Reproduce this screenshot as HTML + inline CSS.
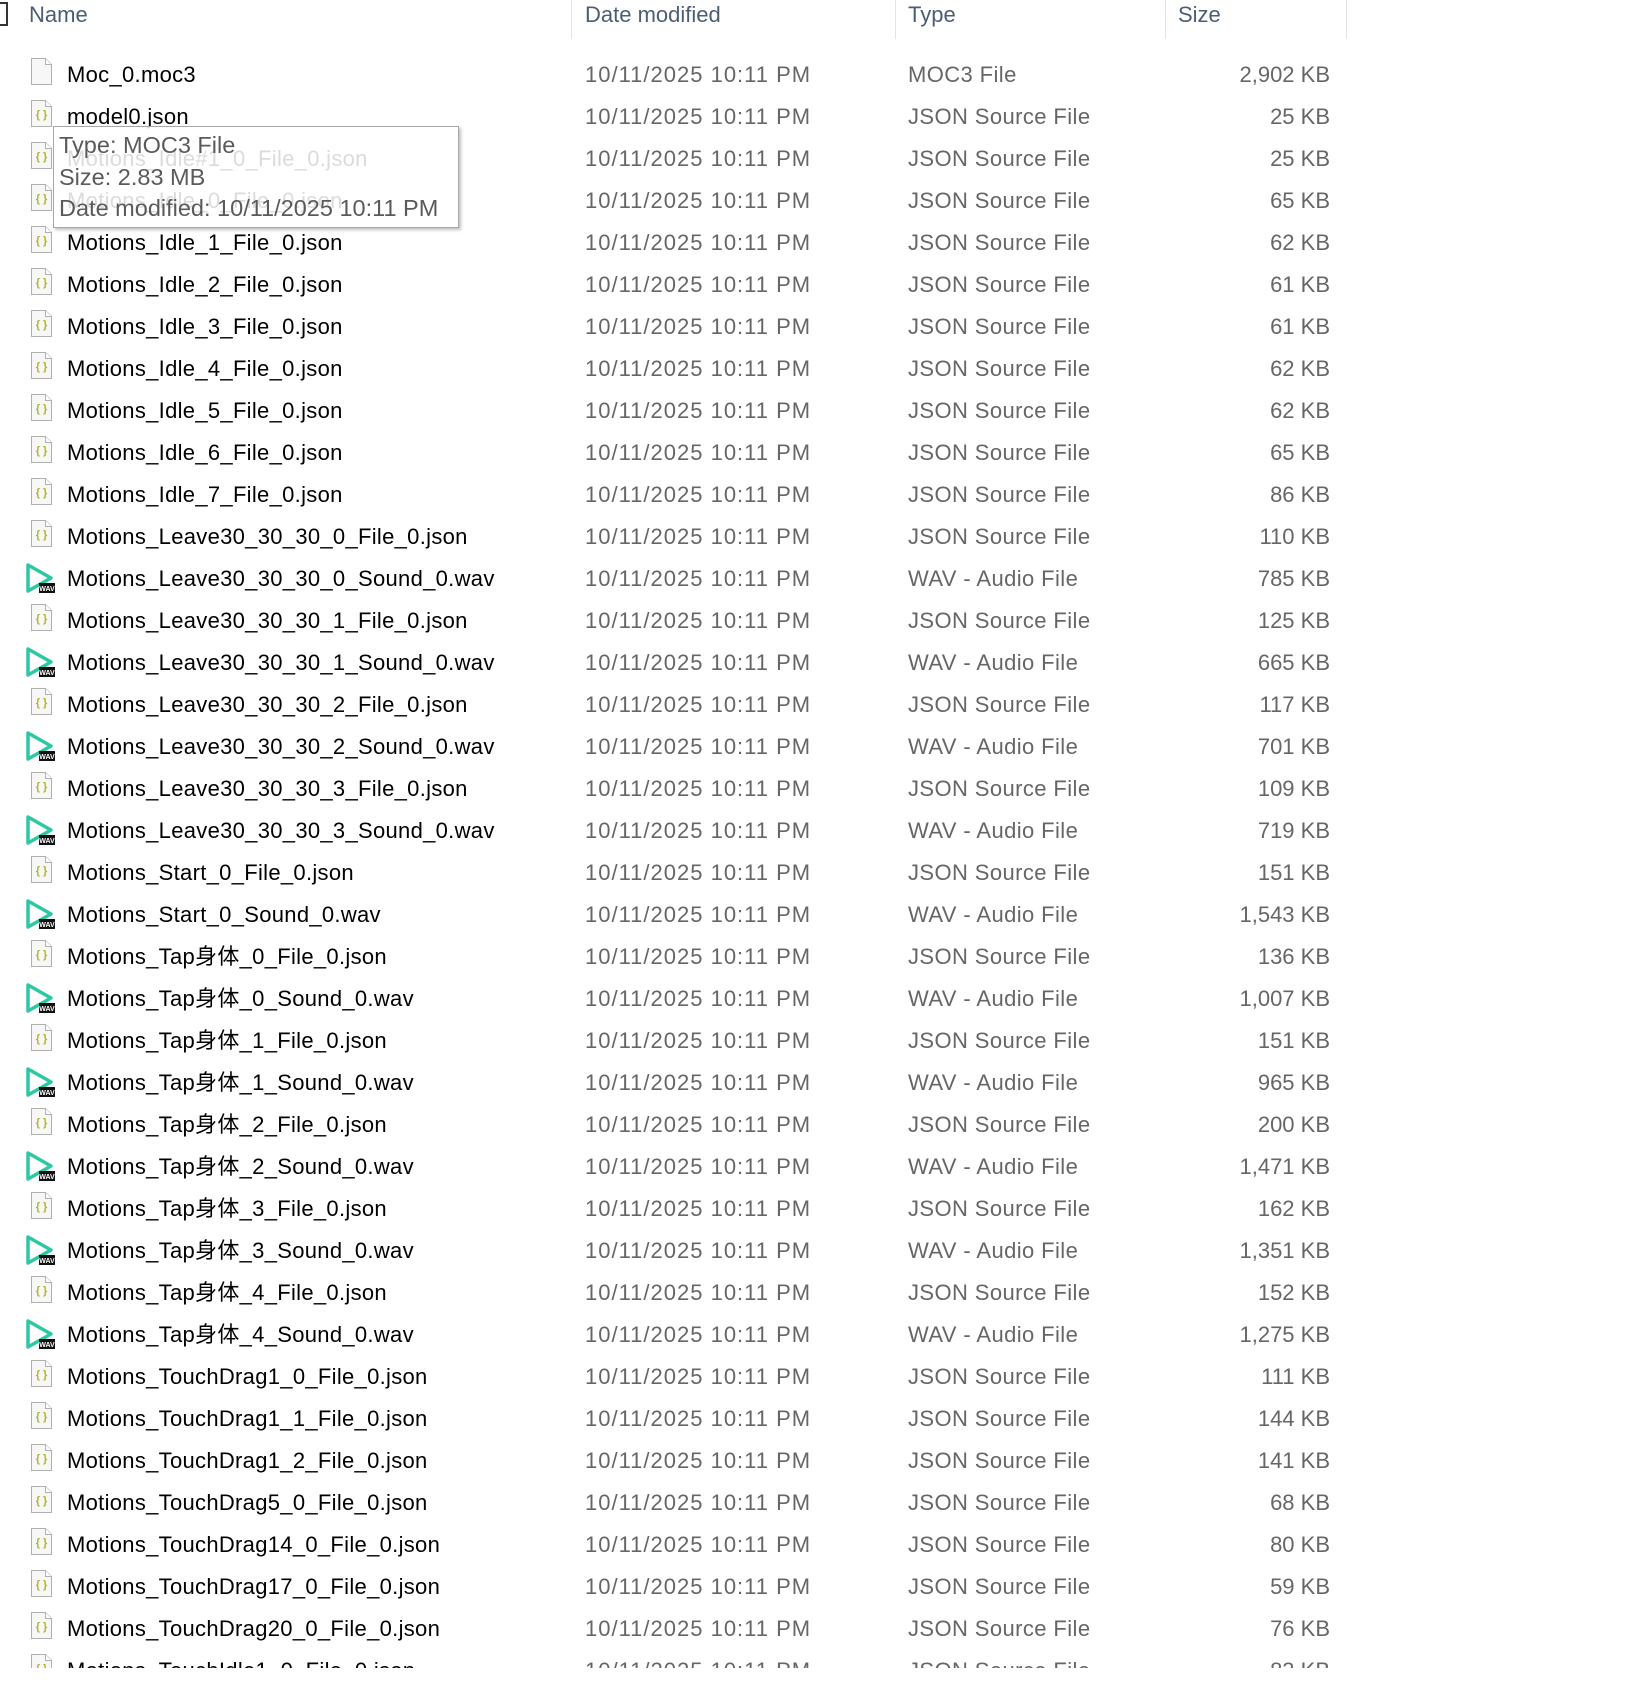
<!DOCTYPE html>
<html><head><meta charset="utf-8"><style>
*{margin:0;padding:0;box-sizing:border-box}
body{width:1634px;height:1699px;background:#fff;position:relative;overflow:hidden;font-family:"Segoe UI","Liberation Sans","Noto Sans CJK SC",sans-serif}
.h{position:absolute;top:0;font-size:22px;color:#4c5e75;line-height:30px}
.sep{position:absolute;top:0;width:1px;height:39px;background:#e3e3e3}
.r{position:absolute;left:0;width:1634px;height:42px;font-size:22px;line-height:42px}
.r span{position:absolute;white-space:nowrap}
.n{left:67px;color:#000;letter-spacing:0.3px}
.d{left:585px;color:#666;letter-spacing:1px}
.t{left:908px;color:#666;letter-spacing:0.4px}
.s{right:304px;color:#666;text-align:right}
.ic{position:absolute;left:31px;top:4px;width:21px;height:27px}
.clip{position:absolute;left:0;top:0;width:1634px;height:1668px;overflow:hidden}
.tip{position:absolute;left:53px;top:126px;width:406px;height:102px;background:rgba(255,255,255,0.86);border:1px solid #a8a8a8;box-shadow:2px 2px 3px rgba(0,0,0,0.25);font-size:23.5px;color:#5a5a5a;line-height:31.5px;padding:3px 0 0 5px;font-family:"Liberation Sans",sans-serif;white-space:nowrap}
</style></head><body>
<div style="position:absolute;left:0;top:2px;width:8px;height:24px;border:2px solid #333;border-left:none"></div>
<div class="h" style="left:29px">Name</div>
<div class="sep" style="left:571px"></div>
<div class="h" style="left:585px">Date modified</div>
<div class="sep" style="left:895px"></div>
<div class="h" style="left:908px">Type</div>
<div class="sep" style="left:1165px"></div>
<div class="h" style="left:1178px">Size</div>
<div class="sep" style="left:1346px"></div>
<svg width="0" height="0" style="position:absolute"><defs>
<symbol id="doc" viewBox="0 0 21 27"><path d="M0.5 0.5H14.5L20.5 6.5V26.5H0.5Z" fill="#f7f7f7" stroke="#b0b0b0"/><path d="M14.5 0.5V6.5H20.5" fill="#fff" stroke="#b0b0b0"/></symbol>
<symbol id="json" viewBox="0 0 21 27"><use href="#doc"/><text x="10.5" y="18" font-size="11" text-anchor="middle" fill="#b5b520" font-family="Liberation Sans" font-weight="bold">{ }</text></symbol>
<symbol id="wav" viewBox="0 0 30 32"><path d="M3 3L26 16L3 29Z" fill="none" stroke="#2cc7a5" stroke-width="3.5" stroke-linejoin="round"/><rect x="14" y="21" width="16" height="10" fill="#111"/><text x="22" y="29" font-size="7" text-anchor="middle" fill="#fff" font-family="Liberation Sans" font-weight="bold">WAV</text></symbol>
</defs></svg>
<div class="clip">
<div class="r" style="top:54px"><svg class="ic"><use href="#doc"/></svg><span class="n">Moc_0.moc3</span><span class="d">10/11/2025 10:11 PM</span><span class="t">MOC3 File</span><span class="s">2,902 KB</span></div>
<div class="r" style="top:96px"><svg class="ic"><use href="#json"/></svg><span class="n">model0.json</span><span class="d">10/11/2025 10:11 PM</span><span class="t">JSON Source File</span><span class="s">25 KB</span></div>
<div class="r" style="top:138px"><svg class="ic"><use href="#json"/></svg><span class="n">Motions_Idle#1_0_File_0.json</span><span class="d">10/11/2025 10:11 PM</span><span class="t">JSON Source File</span><span class="s">25 KB</span></div>
<div class="r" style="top:180px"><svg class="ic"><use href="#json"/></svg><span class="n">Motions_Idle_0_File_0.json</span><span class="d">10/11/2025 10:11 PM</span><span class="t">JSON Source File</span><span class="s">65 KB</span></div>
<div class="r" style="top:222px"><svg class="ic"><use href="#json"/></svg><span class="n">Motions_Idle_1_File_0.json</span><span class="d">10/11/2025 10:11 PM</span><span class="t">JSON Source File</span><span class="s">62 KB</span></div>
<div class="r" style="top:264px"><svg class="ic"><use href="#json"/></svg><span class="n">Motions_Idle_2_File_0.json</span><span class="d">10/11/2025 10:11 PM</span><span class="t">JSON Source File</span><span class="s">61 KB</span></div>
<div class="r" style="top:306px"><svg class="ic"><use href="#json"/></svg><span class="n">Motions_Idle_3_File_0.json</span><span class="d">10/11/2025 10:11 PM</span><span class="t">JSON Source File</span><span class="s">61 KB</span></div>
<div class="r" style="top:348px"><svg class="ic"><use href="#json"/></svg><span class="n">Motions_Idle_4_File_0.json</span><span class="d">10/11/2025 10:11 PM</span><span class="t">JSON Source File</span><span class="s">62 KB</span></div>
<div class="r" style="top:390px"><svg class="ic"><use href="#json"/></svg><span class="n">Motions_Idle_5_File_0.json</span><span class="d">10/11/2025 10:11 PM</span><span class="t">JSON Source File</span><span class="s">62 KB</span></div>
<div class="r" style="top:432px"><svg class="ic"><use href="#json"/></svg><span class="n">Motions_Idle_6_File_0.json</span><span class="d">10/11/2025 10:11 PM</span><span class="t">JSON Source File</span><span class="s">65 KB</span></div>
<div class="r" style="top:474px"><svg class="ic"><use href="#json"/></svg><span class="n">Motions_Idle_7_File_0.json</span><span class="d">10/11/2025 10:11 PM</span><span class="t">JSON Source File</span><span class="s">86 KB</span></div>
<div class="r" style="top:516px"><svg class="ic"><use href="#json"/></svg><span class="n">Motions_Leave30_30_30_0_File_0.json</span><span class="d">10/11/2025 10:11 PM</span><span class="t">JSON Source File</span><span class="s">110 KB</span></div>
<div class="r" style="top:558px"><svg class="ic" style="left:25px;top:4px;width:30px;height:32px"><use href="#wav"/></svg><span class="n">Motions_Leave30_30_30_0_Sound_0.wav</span><span class="d">10/11/2025 10:11 PM</span><span class="t">WAV - Audio File</span><span class="s">785 KB</span></div>
<div class="r" style="top:600px"><svg class="ic"><use href="#json"/></svg><span class="n">Motions_Leave30_30_30_1_File_0.json</span><span class="d">10/11/2025 10:11 PM</span><span class="t">JSON Source File</span><span class="s">125 KB</span></div>
<div class="r" style="top:642px"><svg class="ic" style="left:25px;top:4px;width:30px;height:32px"><use href="#wav"/></svg><span class="n">Motions_Leave30_30_30_1_Sound_0.wav</span><span class="d">10/11/2025 10:11 PM</span><span class="t">WAV - Audio File</span><span class="s">665 KB</span></div>
<div class="r" style="top:684px"><svg class="ic"><use href="#json"/></svg><span class="n">Motions_Leave30_30_30_2_File_0.json</span><span class="d">10/11/2025 10:11 PM</span><span class="t">JSON Source File</span><span class="s">117 KB</span></div>
<div class="r" style="top:726px"><svg class="ic" style="left:25px;top:4px;width:30px;height:32px"><use href="#wav"/></svg><span class="n">Motions_Leave30_30_30_2_Sound_0.wav</span><span class="d">10/11/2025 10:11 PM</span><span class="t">WAV - Audio File</span><span class="s">701 KB</span></div>
<div class="r" style="top:768px"><svg class="ic"><use href="#json"/></svg><span class="n">Motions_Leave30_30_30_3_File_0.json</span><span class="d">10/11/2025 10:11 PM</span><span class="t">JSON Source File</span><span class="s">109 KB</span></div>
<div class="r" style="top:810px"><svg class="ic" style="left:25px;top:4px;width:30px;height:32px"><use href="#wav"/></svg><span class="n">Motions_Leave30_30_30_3_Sound_0.wav</span><span class="d">10/11/2025 10:11 PM</span><span class="t">WAV - Audio File</span><span class="s">719 KB</span></div>
<div class="r" style="top:852px"><svg class="ic"><use href="#json"/></svg><span class="n">Motions_Start_0_File_0.json</span><span class="d">10/11/2025 10:11 PM</span><span class="t">JSON Source File</span><span class="s">151 KB</span></div>
<div class="r" style="top:894px"><svg class="ic" style="left:25px;top:4px;width:30px;height:32px"><use href="#wav"/></svg><span class="n">Motions_Start_0_Sound_0.wav</span><span class="d">10/11/2025 10:11 PM</span><span class="t">WAV - Audio File</span><span class="s">1,543 KB</span></div>
<div class="r" style="top:936px"><svg class="ic"><use href="#json"/></svg><span class="n">Motions_Tap身体_0_File_0.json</span><span class="d">10/11/2025 10:11 PM</span><span class="t">JSON Source File</span><span class="s">136 KB</span></div>
<div class="r" style="top:978px"><svg class="ic" style="left:25px;top:4px;width:30px;height:32px"><use href="#wav"/></svg><span class="n">Motions_Tap身体_0_Sound_0.wav</span><span class="d">10/11/2025 10:11 PM</span><span class="t">WAV - Audio File</span><span class="s">1,007 KB</span></div>
<div class="r" style="top:1020px"><svg class="ic"><use href="#json"/></svg><span class="n">Motions_Tap身体_1_File_0.json</span><span class="d">10/11/2025 10:11 PM</span><span class="t">JSON Source File</span><span class="s">151 KB</span></div>
<div class="r" style="top:1062px"><svg class="ic" style="left:25px;top:4px;width:30px;height:32px"><use href="#wav"/></svg><span class="n">Motions_Tap身体_1_Sound_0.wav</span><span class="d">10/11/2025 10:11 PM</span><span class="t">WAV - Audio File</span><span class="s">965 KB</span></div>
<div class="r" style="top:1104px"><svg class="ic"><use href="#json"/></svg><span class="n">Motions_Tap身体_2_File_0.json</span><span class="d">10/11/2025 10:11 PM</span><span class="t">JSON Source File</span><span class="s">200 KB</span></div>
<div class="r" style="top:1146px"><svg class="ic" style="left:25px;top:4px;width:30px;height:32px"><use href="#wav"/></svg><span class="n">Motions_Tap身体_2_Sound_0.wav</span><span class="d">10/11/2025 10:11 PM</span><span class="t">WAV - Audio File</span><span class="s">1,471 KB</span></div>
<div class="r" style="top:1188px"><svg class="ic"><use href="#json"/></svg><span class="n">Motions_Tap身体_3_File_0.json</span><span class="d">10/11/2025 10:11 PM</span><span class="t">JSON Source File</span><span class="s">162 KB</span></div>
<div class="r" style="top:1230px"><svg class="ic" style="left:25px;top:4px;width:30px;height:32px"><use href="#wav"/></svg><span class="n">Motions_Tap身体_3_Sound_0.wav</span><span class="d">10/11/2025 10:11 PM</span><span class="t">WAV - Audio File</span><span class="s">1,351 KB</span></div>
<div class="r" style="top:1272px"><svg class="ic"><use href="#json"/></svg><span class="n">Motions_Tap身体_4_File_0.json</span><span class="d">10/11/2025 10:11 PM</span><span class="t">JSON Source File</span><span class="s">152 KB</span></div>
<div class="r" style="top:1314px"><svg class="ic" style="left:25px;top:4px;width:30px;height:32px"><use href="#wav"/></svg><span class="n">Motions_Tap身体_4_Sound_0.wav</span><span class="d">10/11/2025 10:11 PM</span><span class="t">WAV - Audio File</span><span class="s">1,275 KB</span></div>
<div class="r" style="top:1356px"><svg class="ic"><use href="#json"/></svg><span class="n">Motions_TouchDrag1_0_File_0.json</span><span class="d">10/11/2025 10:11 PM</span><span class="t">JSON Source File</span><span class="s">111 KB</span></div>
<div class="r" style="top:1398px"><svg class="ic"><use href="#json"/></svg><span class="n">Motions_TouchDrag1_1_File_0.json</span><span class="d">10/11/2025 10:11 PM</span><span class="t">JSON Source File</span><span class="s">144 KB</span></div>
<div class="r" style="top:1440px"><svg class="ic"><use href="#json"/></svg><span class="n">Motions_TouchDrag1_2_File_0.json</span><span class="d">10/11/2025 10:11 PM</span><span class="t">JSON Source File</span><span class="s">141 KB</span></div>
<div class="r" style="top:1482px"><svg class="ic"><use href="#json"/></svg><span class="n">Motions_TouchDrag5_0_File_0.json</span><span class="d">10/11/2025 10:11 PM</span><span class="t">JSON Source File</span><span class="s">68 KB</span></div>
<div class="r" style="top:1524px"><svg class="ic"><use href="#json"/></svg><span class="n">Motions_TouchDrag14_0_File_0.json</span><span class="d">10/11/2025 10:11 PM</span><span class="t">JSON Source File</span><span class="s">80 KB</span></div>
<div class="r" style="top:1566px"><svg class="ic"><use href="#json"/></svg><span class="n">Motions_TouchDrag17_0_File_0.json</span><span class="d">10/11/2025 10:11 PM</span><span class="t">JSON Source File</span><span class="s">59 KB</span></div>
<div class="r" style="top:1608px"><svg class="ic"><use href="#json"/></svg><span class="n">Motions_TouchDrag20_0_File_0.json</span><span class="d">10/11/2025 10:11 PM</span><span class="t">JSON Source File</span><span class="s">76 KB</span></div>
<div class="r" style="top:1650px"><svg class="ic"><use href="#json"/></svg><span class="n">Motions_TouchIdle1_0_File_0.json</span><span class="d">10/11/2025 10:11 PM</span><span class="t">JSON Source File</span><span class="s">83 KB</span></div>
</div>
<div class="tip">Type: MOC3 File<br>Size: 2.83 MB<br>Date modified: 10/11/2025 10:11 PM</div>
</body></html>
